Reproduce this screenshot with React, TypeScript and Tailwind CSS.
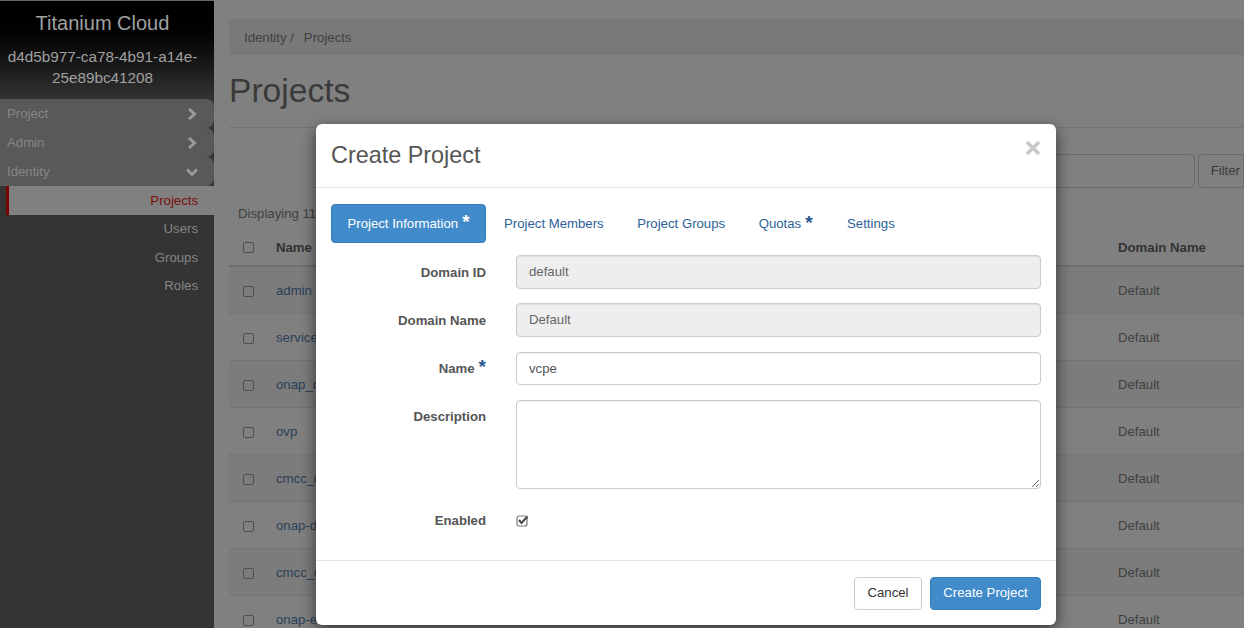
import React from "react";

const rows = ["admin", "service", "onap_r", "ovp", "cmcc_d", "onap-d", "cmcc_o", "onap-e"];

function Chevron({ down }: { down?: boolean }) {
  return (
    <svg width="12" height="14" viewBox="0 0 12 14" className="text-[#9a9a9a]">
      {down ? (
        <path d="M1 4.5 L6 9.5 L11 4.5" fill="none" stroke="currentColor" strokeWidth="3" />
      ) : (
        <path d="M3 2 L8.5 7 L3 12" fill="none" stroke="currentColor" strokeWidth="3" />
      )}
    </svg>
  );
}

function Star({ className }: { className: string }) {
  return <span className={"text-[19px] h-[13px] leading-none font-bold " + className}>*</span>;
}

function PageCheck() {
  return <span className="block w-[11px] h-[11px] rounded-[2px] border-[1.5px] border-[#4d4f52]" />;
}

function Field({ label, children, h, star, pt }: { label: string; children: React.ReactNode; h: string; star?: boolean; pt: string }) {
  return (
    <div className={"flex " + h}>
      <div className={"w-[155px] shrink-0 flex justify-end items-start font-bold text-[#555] " + pt}>
        {label}
        {star && <Star className="text-[#2a5a8f] ml-[4px] relative top-[-2px]" />}
      </div>
      <div className="ml-[30px] w-[525px]">{children}</div>
    </div>
  );
}

export default function App() {
  return (
    <div className="relative w-[1244px] h-[628px] overflow-hidden flex bg-[#808080] font-['Liberation_Sans',Arial,sans-serif] text-[13.2px]">
      <aside className="w-[214px] shrink-0 h-full bg-[#343434] flex flex-col">
        <div className="h-[99px] pt-[1px] pr-[9px] bg-gradient-to-b from-[#000000] to-[#343434] border-t border-[#666] text-center text-[#a0a0a0]">
          <div className="text-[20px] leading-[22px] mt-[10px]">Titanium Cloud</div>
          <div className="text-[15.3px] leading-[21px] mt-[11.5px]">d4d5b977-ca78-4b91-a14e-25e89bc41208</div>
        </div>
        {[["Project", false], ["Admin", false], ["Identity", true]].map(([t, d]) => (
          <div
            key={t as string}
            className="h-[29px] flex items-center justify-between pl-[7px] pr-[16px] bg-[#595959] rounded-r-[8px] text-[#868686]"
          >
            <span>{t as string}</span>
            <Chevron down={d as boolean} />
          </div>
        ))}
        <div className="ml-[6px] h-[29px] flex items-center justify-end pr-[16px] bg-[#808080] border-l-[3px] border-[#7a0000] text-[#7a0d0d]">
          Projects
        </div>
        {["Users", "Groups", "Roles"].map((t) => (
          <div key={t} className="h-[28.5px] flex items-center justify-end pr-[16px] text-[#868686]">
            {t}
          </div>
        ))}
      </aside>

      <main className="flex-1 min-w-0 pl-[15px] pt-[19px] text-[#3d3d3d]">
        <div className="h-[36px] pt-[1px] flex items-center pl-[15px] bg-[#797979] rounded-l-[4px] text-[#404040]">
          Identity /<span className="ml-[10px]">Projects</span>
        </div>
        <h1 className="text-[33.6px] leading-[40px] mt-[16px] text-[#3a3a3a]">Projects</h1>
        <div className="h-px bg-[#747474] mt-[16px]" />
        <div className="h-[34px] mt-[26px] flex justify-end gap-[3px]">
          <div className="w-[300px] border border-[#6a6a6a] rounded-[4px]" />
          <div className="w-[46px] border border-[#6a6a6a] rounded-l-[4px] flex items-center justify-end pr-[3px] text-[#3a3a3a]">
            Filter
          </div>
        </div>
        <div className="mt-[18px] pl-[9px] leading-[16px] text-[#404040]">Displaying 11 items</div>
        <div className="h-[42px] mt-[3px] pt-[5px] flex items-center border-b-2 border-[#6f6f6f] font-bold text-[#333] relative">
          <span className="ml-[14px]"><PageCheck /></span>
          <span className="ml-[22px]">Name</span>
          <span className="ml-auto w-[126px]">Domain Name</span>
        </div>
        {rows.map((r, i) => (
          <div
            key={r}
            className={"h-[47px] shrink-0 pt-[1px] flex items-center border-b border-[#747474] " + (i % 2 === 0 ? "bg-[#7c7c7c]" : "")}
          >
            <span className="ml-[14px] mt-[1px]"><PageCheck /></span>
            <span className="ml-[22px] text-[#2a4058]">{r}</span>
            <span className="ml-auto w-[126px] text-[#404040]">Default</span>
          </div>
        ))}
      </main>

      <div className="absolute left-[316px] top-[124px] w-[740px] h-[501px] bg-white rounded-[6px] shadow-[0_5px_15px_rgba(0,0,0,0.6)] flex flex-col">
        <div className="h-[64px] shrink-0 border-b border-[#e5e5e5] flex items-center justify-between pl-[15px] pr-[15px]">
          <h2 className="text-[23.4px] leading-[26px] text-[#555] mt-[-1px]">Create Project</h2>
          <svg width="16" height="16" viewBox="0 0 16 16" className="self-start mt-[16px] text-[#c9c9c9]">
            <path d="M2 2 L14 14 M14 2 L2 14" stroke="currentColor" strokeWidth="3.8" />
          </svg>
        </div>
        <div className="flex-1 pl-[15px] pt-[16px]">
          <div className="flex items-center h-[39px] text-[#2a6297]">
            <div className="h-full w-[155px] flex items-center justify-center bg-[#428bca] border border-[#357ebd] rounded-[4px] text-white">
              Project Information
              <Star className="text-white ml-[4px] relative top-[-5px]" />
            </div>
            <span className="ml-[18px]">Project Members</span>
            <span className="ml-[33.5px]">Project Groups</span>
            <span className="ml-[33.5px] flex items-center">Quotas<Star className="text-[#2a5a8f] ml-[4px] relative top-[-4px]" /></span>
            <span className="ml-[34.5px]">Settings</span>
          </div>
          <div className="mt-[12px] flex flex-col">
            <Field label="Domain ID" h="h-[48px]" pt="pt-[8px]">
              <div className="h-[34px] bg-[#eeeeee] border border-[#cccccc] rounded-[4px] pl-[12px] flex items-center text-[#666] shadow-[inset_0_1px_1px_rgba(0,0,0,0.075)]">default</div>
            </Field>
            <Field label="Domain Name" h="h-[48.5px]" pt="pt-[8px]">
              <div className="h-[34px] bg-[#eeeeee] border border-[#cccccc] rounded-[4px] pl-[12px] flex items-center text-[#666] shadow-[inset_0_1px_1px_rgba(0,0,0,0.075)]">Default</div>
            </Field>
            <Field label="Name" h="h-[48px]" star pt="pt-[7px]">
              <div className="h-[33px] bg-white border border-[#cccccc] rounded-[4px] pl-[12px] pt-[1px] flex items-center text-[#555] shadow-[inset_0_1px_1px_rgba(0,0,0,0.075)]">vcpe</div>
            </Field>
            <Field label="Description" h="h-[104px]" pt="pt-[7px]">
              <textarea readOnly className="block w-full h-[89px] bg-white border border-[#cccccc] rounded-[4px] shadow-[inset_0_1px_1px_rgba(0,0,0,0.075)] outline-none" />
            </Field>
            <div className="flex h-[30px] items-center">
              <div className="w-[155px] text-right font-bold text-[#555] mt-[4px]">Enabled</div>
              <svg width="13" height="13" viewBox="0 0 13 13" className="ml-[30px] mt-[4px]">
                <rect x="1" y="2" width="10" height="10" rx="2" fill="#fff" stroke="#777" strokeWidth="1.2" />
                <path d="M3 6 L5.5 9 L11.5 2.5" fill="none" stroke="#444" strokeWidth="2" />
              </svg>
            </div>
          </div>
        </div>
        <div className="h-[65px] shrink-0 border-t border-[#e5e5e5] flex items-center justify-end gap-[8px] pr-[15px]">
          <div className="h-[33px] w-[68px] flex items-center justify-center border border-[#cccccc] rounded-[4px] text-[#333]">Cancel</div>
          <div className="h-[33px] w-[111px] flex items-center justify-center bg-[#428bca] border border-[#357ebd] rounded-[4px] text-white">Create Project</div>
        </div>
      </div>
    </div>
  );
}
